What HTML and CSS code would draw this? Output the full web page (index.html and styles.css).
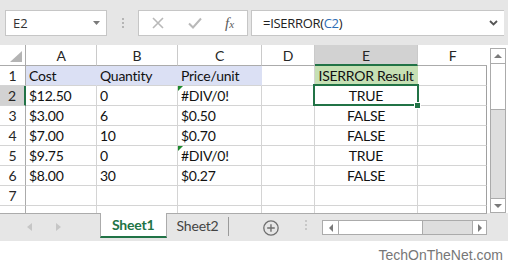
FILE: index.html
```html
<!DOCTYPE html>
<html>
    <head>
        <title>ISERROR</title>
        <link rel="stylesheet" href="styles.css">
    </head>
    <body>
        <div class="toolbar">
            <div class="namebox">
                <span>E2</span>
                <svg class="caret" width="7" height="4" viewBox="0 0 7 4"><path d="M0 0H7L3.5 4Z" fill="#7a7a7a"/></svg>
            </div>
            <div class="grip"><i></i><i></i><i></i></div>
            <div class="fxbox">
                <svg width="12" height="12" viewBox="0 0 12 12"><path d="M1 1L11 11M11 1L1 11" stroke="#b9b9b9" stroke-width="1.6" fill="none"/></svg>
                <svg width="14" height="12" viewBox="0 0 14 12"><path d="M1 6.5L5 10.5L13 1.5" stroke="#b9b9b9" stroke-width="2" fill="none"/></svg>
                <span class="fx">f<small>x</small></span>
            </div>
            <div class="formula">
                <span>=ISERROR(<span class="ref">C2</span>)</span>
                <svg class="chevron" width="9" height="6" viewBox="0 0 9 6"><path d="M1 1L4.5 4.5L8 1" stroke="#555" stroke-width="1.8" fill="none"/></svg>
            </div>
        </div>

        <div class="main">
            <div class="sheet">
                <div class="corner"><svg width="12" height="11" viewBox="0 0 12 11"><path d="M12 0V11H0Z" fill="#b4b4b4"/></svg></div>
                <div class="colhead">A</div>
                <div class="colhead">B</div>
                <div class="colhead">C</div>
                <div class="colhead">D</div>
                <div class="colhead active">E</div>
                <div class="colhead last">F</div>

                <div class="rowhead">1</div>
                <div class="cell blue">Cost</div>
                <div class="cell blue">Quantity</div>
                <div class="cell blue">Price/unit</div>
                <div class="cell"></div>
                <div class="cell green center">ISERROR Result</div>
                <div class="cell last"></div>

                <div class="rowhead active">2</div>
                <div class="cell">$12.50</div>
                <div class="cell">0</div>
                <div class="cell err">#DIV/0!</div>
                <div class="cell"></div>
                <div class="cell center selected">TRUE</div>
                <div class="cell last"></div>

                <div class="rowhead">3</div>
                <div class="cell">$3.00</div>
                <div class="cell">6</div>
                <div class="cell">$0.50</div>
                <div class="cell"></div>
                <div class="cell center">FALSE</div>
                <div class="cell last"></div>

                <div class="rowhead">4</div>
                <div class="cell">$7.00</div>
                <div class="cell">10</div>
                <div class="cell">$0.70</div>
                <div class="cell"></div>
                <div class="cell center">FALSE</div>
                <div class="cell last"></div>

                <div class="rowhead">5</div>
                <div class="cell">$9.75</div>
                <div class="cell">0</div>
                <div class="cell err">#DIV/0!</div>
                <div class="cell"></div>
                <div class="cell center">TRUE</div>
                <div class="cell last"></div>

                <div class="rowhead">6</div>
                <div class="cell">$8.00</div>
                <div class="cell">30</div>
                <div class="cell">$0.27</div>
                <div class="cell"></div>
                <div class="cell center">FALSE</div>
                <div class="cell last"></div>

                <div class="rowhead">7</div>
                <div class="cell"></div>
                <div class="cell"></div>
                <div class="cell"></div>
                <div class="cell"></div>
                <div class="cell"></div>
                <div class="cell last"></div>

                <div class="rowhead"></div>
                <div class="cell"></div>
                <div class="cell"></div>
                <div class="cell"></div>
                <div class="cell"></div>
                <div class="cell"></div>
                <div class="cell last"></div>
            </div>
            <div class="vscroll">
                <div class="sbtn"><svg width="8" height="4" viewBox="0 0 8 4"><path d="M0 4H8L4 0Z" fill="#7a7a7a"/></svg></div>
                <div class="vthumb"></div>
                <div class="vtrack"></div>
                <div class="sbtn down"><svg width="8" height="4" viewBox="0 0 8 4"><path d="M0 0H8L4 4Z" fill="#7a7a7a"/></svg></div>
            </div>
        </div>

        <div class="tabbar">
            <div class="tabs">
                <div class="nav">
                    <svg width="5" height="8" viewBox="0 0 5 8"><path d="M5 0V8L0 4Z" fill="#c6c6c6"/></svg>
                    <svg width="5" height="8" viewBox="0 0 5 8"><path d="M0 0V8L5 4Z" fill="#c6c6c6"/></svg>
                </div>
                <div class="tab active">Sheet1</div>
                <div class="tab">Sheet2</div>
                <div class="tabsep"></div>
                <svg class="add" width="16" height="16" viewBox="0 0 16 16"><circle cx="8" cy="8" r="7.2" stroke="#6f6f6f" stroke-width="1.3" fill="none"/><path d="M8 4.2V11.8M4.2 8H11.8" stroke="#6f6f6f" stroke-width="1.4"/></svg>
                <div class="grip small"><i></i><i></i><i></i></div>
                <div class="hscroll">
                    <div class="hbtn"><svg width="4" height="8" viewBox="0 0 4 8"><path d="M4 0V8L0 4Z" fill="#7a7a7a"/></svg></div>
                    <div class="hthumb"></div>
                    <div class="htrack"></div>
                    <div class="hbtn right"><svg width="4" height="8" viewBox="0 0 4 8"><path d="M0 0V8L4 4Z" fill="#7a7a7a"/></svg></div>
                </div>
            </div>
        </div>

        <div class="footer">TechOnTheNet.com</div>
    </body>
</html>
```

FILE: styles.css
```css
html, body {
    margin:0;
    padding:0;
}

body {
    width:508px;
    height:266px;
    overflow:hidden;
    background:#fff;
    font-family: Lato, "Liberation Sans", sans-serif;
    color:#222;
}

/* formula bar */

.toolbar {
    height:45px;
    box-sizing:border-box;
    padding:10px 0 0 5px;
    background:#e6e6e6;
    display:flex;
    align-items:flex-start;
    font-family: "Open Sans", sans-serif;
    font-size:13px;
}

.namebox {
    width:102px;
    height:26px;
    box-sizing:border-box;
    border:1px solid #c6c6c6;
    background:#fff;
    display:flex;
    align-items:center;
    padding:0 6px 0 7px;
    justify-content:space-between;
    color:#333;
}

.grip {
    width:2px;
    margin:8px 14px 0 15px;
    display:flex;
    flex-direction:column;
    gap:2px;
}

.grip i {
    display:block;
    width:2px;
    height:2px;
    background:#b5b5b5;
}

.fxbox {
    width:110px;
    height:26px;
    box-sizing:border-box;
    border:1px solid #c6c6c6;
    background:#fff;
    display:flex;
    align-items:center;
    padding-left:13px;
    gap:24px;
}

.fx {
    font-family: "Liberation Serif", serif;
    font-style:italic;
    font-size:15px;
    color:#5a5a5a;
    margin-left:-1px;
}

.fx small {
    font-size:11px;
}

.formula {
    width:253px;
    height:26px;
    box-sizing:border-box;
    margin-left:3px;
    border:1px solid #c6c6c6;
    border-right:0;
    background:#fff;
    display:flex;
    align-items:center;
    justify-content:space-between;
    padding:0 6px 0 11px;
    color:#222;
    letter-spacing:-0.3px;
}

.formula .ref {
    color:#2e6db4;
}

/* grid */

.main {
    display:flex;
    height:168px;
}

.sheet {
    width:487px;
    height:168px;
    overflow:hidden;
    display:grid;
    grid-template-columns:26px 71px 81px 84px 53px 103px 69px;
    grid-template-rows:21px;
    grid-auto-rows:20px;
    font-size:14px;
    letter-spacing:-0.25px;
    line-height:20px;
}

.sheet > div {
    box-sizing:border-box;
    white-space:nowrap;
}

.corner {
    border-right:1px solid #ababab;
    border-bottom:1px solid #ababab;
    display:flex;
    align-items:flex-end;
    justify-content:flex-end;
    padding:0 3px 3px 0;
}

.colhead {
    border-right:1px solid #cacaca;
    border-bottom:1px solid #ababab;
    text-align:center;
    line-height:21px;
    color:#262626;
}

.colhead.active {
    background:#d2d2d2;
    border-bottom:2px solid #217346;
}

.colhead.last {
    border-right:0;
}

.rowhead {
    border-right:1px solid #ababab;
    border-bottom:1px solid #d4d4d4;
    text-align:center;
    color:#262626;
}

.rowhead.active {
    background:#d2d2d2;
    border-right:2px solid #217346;
}

.cell {
    border-right:1px solid #d4d4d4;
    border-bottom:1px solid #d4d4d4;
    padding:0 3px;
    color:#111;
    position:relative;
}

.cell.last {
    border-right-color:#a0a0a0;
}

.cell.center {
    text-align:center;
}

.cell.blue {
    background:#dbe0f4;
    border-right-color:#dbe0f4;
}

.cell.green {
    background:#c6e0b4;
    border-right-color:#c6e0b4;
}

.cell.err::before {
    content:"";
    position:absolute;
    left:0;
    top:0;
    border-top:5px solid #1d8a2f;
    border-right:5px solid transparent;
}

.cell.selected::after {
    content:"";
    position:absolute;
    left:-2px;
    top:-2px;
    width:106px;
    height:22px;
    box-sizing:border-box;
    border:2px solid #217346;
}

.cell.selected::before {
    content:"";
    position:absolute;
    right:-3px;
    bottom:-3px;
    width:5px;
    height:5px;
    background:#217346;
    box-shadow:0 0 0 1px #fff;
    z-index:1;
}

/* vertical scroll bar */

.vscroll {
    width:16px;
    height:165px;
    margin:3px 0 0 3px;
    box-sizing:border-box;
    border:1px solid #ababab;
    display:flex;
    flex-direction:column;
    background:#dedede;
}

.sbtn {
    height:14px;
    background:#fff;
    border-bottom:1px solid #ababab;
    display:flex;
    align-items:center;
    justify-content:center;
    flex:none;
}

.sbtn.down {
    border-bottom:0;
    border-top:1px solid #ababab;
    height:13px;
}

.vthumb {
    height:45px;
    background:#fff;
    border-bottom:1px solid #ababab;
    flex:none;
}

.vtrack {
    flex:1;
}

/* sheet tabs */

.tabbar {
    height:28px;
    background:#e6e6e6;
}

.tabs {
    width:487px;
    height:28px;
    box-sizing:border-box;
    border-top:1px solid #ababab;
    display:flex;
    align-items:flex-start;
}

.nav {
    width:100px;
    height:27px;
    display:flex;
    align-items:center;
    padding-left:27px;
    box-sizing:border-box;
    gap:24px;
    margin-top:-1px;
}

.tab {
    width:62px;
    height:24px;
    text-align:center;
    font-size:14px;
    letter-spacing:-0.2px;
    line-height:24px;
    color:#444;
}

.tab.active {
    width:67px;
    height:25px;
    box-sizing:border-box;
    margin-top:-1px;
    background:#fff;
    border-left:1px solid #ababab;
    border-right:1px solid #ababab;
    border-bottom:2px solid #217346;
    font-weight:bold;
    color:#217346;
    line-height:24px;
}

.tabsep {
    width:1px;
    height:19px;
    margin-top:3px;
    background:#9a9a9a;
}

.add {
    margin:6px 0 0 34px;
}

.grip.small {
    margin:6px 15px 0 26px;
}

.grip.small i {
    background:#c8c8c8;
}

.hscroll {
    width:165px;
    height:15px;
    margin-top:6px;
    box-sizing:border-box;
    border:1px solid #ababab;
    display:flex;
    background:#dedede;
}

.hbtn {
    width:15px;
    background:#fff;
    border-right:1px solid #ababab;
    display:flex;
    align-items:center;
    justify-content:center;
    flex:none;
}

.hbtn.right {
    width:13px;
    border-right:0;
    border-left:1px solid #ababab;
}

.hthumb {
    width:83px;
    background:#fff;
    border-right:1px solid #ababab;
    flex:none;
}

.htrack {
    flex:1;
}

.footer {
    height:26px;
    text-align:right;
    padding-right:5px;
    font-family: "Liberation Sans", Arial, sans-serif;
    font-size:14px;
    line-height:28px;
    color:#777;
}
```
